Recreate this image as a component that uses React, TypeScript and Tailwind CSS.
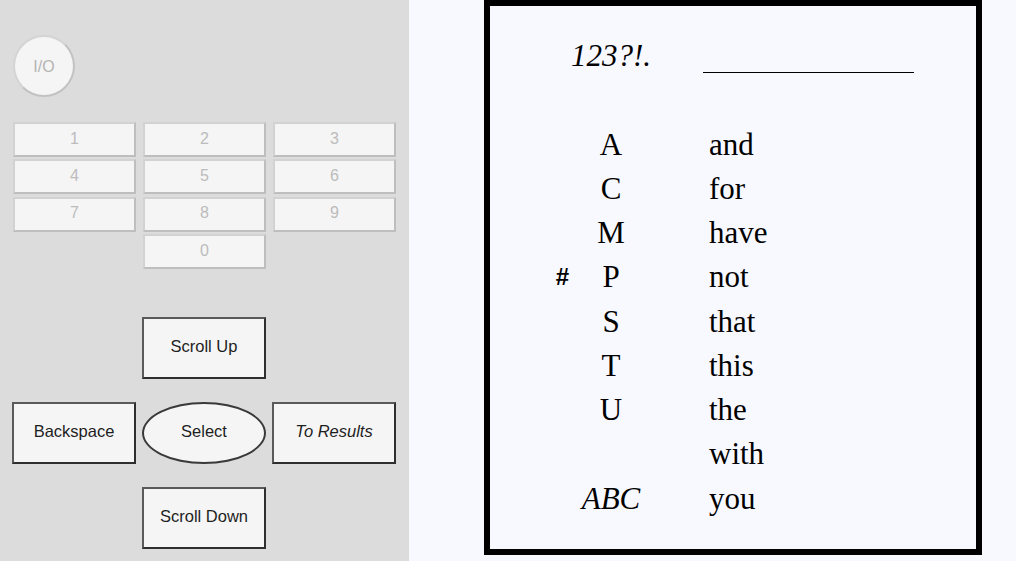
import React from 'react';

type Row = {
  mark?: string;
  letter?: string;
  italicLetter?: boolean;
  word?: string;
  blank?: boolean;
};

const rows: Row[] = [
  { letter: '123?!.', italicLetter: true, blank: true },
  {},
  { letter: 'A', word: 'and' },
  { letter: 'C', word: 'for' },
  { letter: 'M', word: 'have' },
  { mark: '#', letter: 'P', word: 'not' },
  { letter: 'S', word: 'that' },
  { letter: 'T', word: 'this' },
  { letter: 'U', word: 'the' },
  { word: 'with' },
  { letter: 'ABC', italicLetter: true, word: 'you' },
];

const keys = ['1', '2', '3', '4', '5', '6', '7', '8', '9'];

const KeyButton: React.FC<{ label: string; className?: string }> = ({ label, className = '' }) => (
  <button
    className={`h-[35px] pb-[2px] bg-[#f5f5f5] border-2 border-t-[#d2d2d2] border-l-[#d2d2d2] border-r-[#bebebe] border-b-[#bebebe] text-[16px] text-[#bcbcbc] ${className}`}
  >
    {label}
  </button>
);

const NavButton: React.FC<{ label: string; italic?: boolean; className?: string }> = ({
  label,
  italic,
  className = '',
}) => (
  <button
    className={`h-[62px] pb-[3px] bg-[#f5f5f5] border-2 border-t-[#5a5a5a] border-l-[#5a5a5a] border-r-[#2e2e2e] border-b-[#2e2e2e] text-[16.5px] text-[#1e1e1e] ${
      italic ? 'italic' : ''
    } ${className}`}
  >
    {label}
  </button>
);

export default function App() {
  return (
    <div className="flex w-[1016px] h-[561px] overflow-hidden bg-[#f8f8ff]">
      {/* remote panel */}
      <div className="w-[409px] h-full bg-[#dcdcdc] flex flex-col font-['Liberation_Sans',Arial,sans-serif]">
        <button className="mt-[35px] ml-[13px] w-[62px] h-[62px] pt-[1px] rounded-full bg-[#f5f5f5] border-2 border-t-[#d4d4d4] border-l-[#d4d4d4] border-r-[#c2c2c2] border-b-[#c2c2c2] text-[16px] text-[#b4b4b4]">
          I/O
        </button>

        <div className="mt-[25px] ml-[13px] grid grid-cols-[123px_123px_123px] gap-x-[7px] gap-y-[2.4px]">
          {keys.map((k) => (
            <KeyButton key={k} label={k} />
          ))}
          <KeyButton label="0" className="col-start-2" />
        </div>

        <div className="mt-[48px] ml-[12px] grid grid-cols-[124px_124px_124px] gap-x-[6px] gap-y-[23px]">
          <NavButton label="Scroll Up" className="col-start-2" />
          <NavButton label="Backspace" className="col-start-1" />
          <button className="h-[62px] pb-[3px] rounded-[50%] bg-[#f5f5f5] border-2 border-[#3a3a3a] text-[16.5px] text-[#1e1e1e]">
            Select
          </button>
          <NavButton label="To Results" italic />
          <NavButton label="Scroll Down" className="col-start-2" />
        </div>
      </div>

      {/* results board */}
      <div className="flex-1 pl-[75px]">
        <div className="w-[498px] h-[555px] border-[6px] border-black bg-[#f8f8ff] pt-[28px] font-['Liberation_Serif','Times_New_Roman',serif] text-[31px] leading-[44.25px] text-black">
          {rows.map((r, i) => (
            <div key={i} className="grid grid-cols-[81px_80px_1fr] h-[44.25px]">
              <div className="flex items-center justify-end pr-[2px]">
                {r.mark && (
                  <span className="font-['Liberation_Sans',Arial,sans-serif] font-bold text-[24px] leading-none">
                    {r.mark}
                  </span>
                )}
              </div>
              <div className={`flex justify-center whitespace-nowrap ${r.italicLetter ? 'italic' : ''}`}>
                {r.letter}
              </div>
              <div className="pl-[58px] whitespace-nowrap">
                {r.blank ? <div className="ml-[-6px] mt-[37.5px] w-[211px] h-px bg-black" /> : r.word}
              </div>
            </div>
          ))}
        </div>
      </div>
    </div>
  );
}
